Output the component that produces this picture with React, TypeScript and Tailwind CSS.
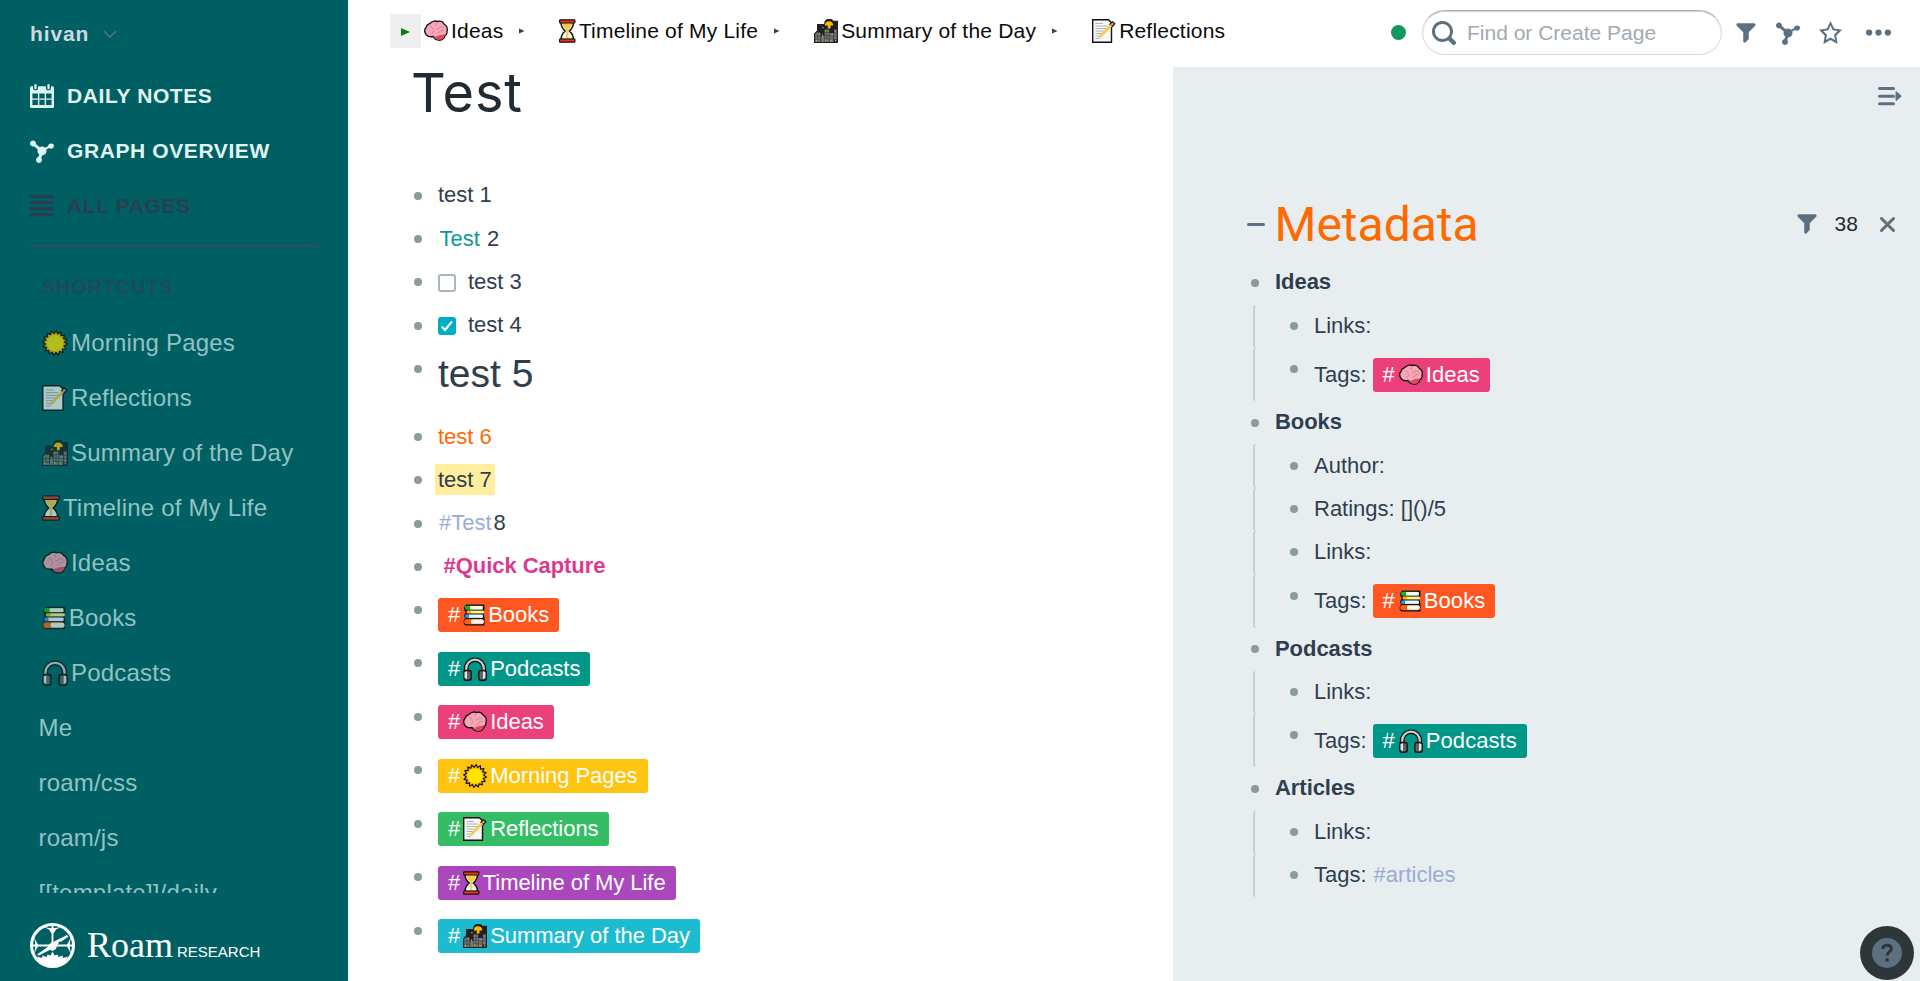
import React from "react";

type EmojiName = "sun" | "memo" | "city" | "hourglass" | "brain" | "books" | "headphones";

const emojiWidth: Record<EmojiName, number> = {
  sun: 24,
  memo: 24,
  city: 24,
  hourglass: 16.5,
  brain: 24,
  books: 22,
  headphones: 24,
};

const sunPoints = Array.from({ length: 32 }, (_, i) => {
  const r = i % 2 === 0 ? 11.5 : 8.8;
  const a = (Math.PI * 2 * i) / 32 + Math.PI / 32;
  return `${(12 + r * Math.cos(a)).toFixed(2)},${(12 + r * Math.sin(a)).toFixed(2)}`;
}).join(" ");

function EmojiArt({ name }: { name: EmojiName }) {
  switch (name) {
    case "sun":
      return (
        <>
          <polygon points={sunPoints} fill="#ffb900" stroke="#111" strokeWidth="1.2" strokeLinejoin="round" />
          <circle cx="12" cy="12" r="7.4" fill="#ffe500" />
        </>
      );
    case "memo":
      return (
        <>
          <path d="M.7.7h15.8l3 3v19.6H.7z" fill="#f7f7f7" stroke="#111" strokeWidth="1.4" />
          <path d="M3.5 4.5H11M3.5 7h11.5M3.5 9.5h12M3.5 12h9M3.5 14.5h8M3.5 17h7M3.5 19.5h4" stroke="#a5aaae" strokeWidth=".9" />
          <path d="M20.5 2.6l2.3 2.2-2.6 2.8-2.4-2.2z" fill="#e39a96" stroke="#111" strokeWidth="1.2" strokeLinejoin="round" />
          <path d="M18.2 5.2l2 2L9.5 18l-2.6.9.7-2.5z" fill="#ffc83d" />
          <path d="M7.7 16.3l1.8 1.7-2.8 1.1z" fill="#e8c8a0" />
        </>
      );
    case "city":
      return (
        <>
          <path d="M0 24V14.500L3 11.500V5h7.200a5.100 5.100 0 0 1 9.300-3.200H24V24z" fill="#1f2122" />
          <path d="M10.900 5.500a4.200 4.200 0 0 1 8.200 0v1h-2.600v3h-2.700v-3h-2.900z" fill="#ffb900" />
          <path d="M1.200 23v-8l2.300-2.300L6.500 15v8zM10.600 10.500h4.600V23h-4.600zM7.200 17h3V23h-3zM15.600 14h3.800v9h-3.800zM20 10.500h2.800V20.500H20z" fill="#74797c" />
          <path d="M1.200 17.200h5.300M1.200 20.200h5.300M3.800 13v10M10.600 13.600H15.200M10.600 16.600H15.200M10.600 19.800H15.200M12.900 10.500V23M15.600 17h3.800M15.600 20h3.800M20 14h2.800M20 17h2.800" stroke="#33373a" strokeWidth=".6" />
          <path d="M8.300 8h1.200v1.200H8.300zM5.200 13.700h1V15h-1zM11.300 11.500h1v1h-1zM8 15.500h1.100v1.200H8zM2 20.900h1.200v1.300H2zM11.300 20.600h1.200v1.400h-1.200zM16.500 20.700h1v1.300h-1zM21 21h1.300v1.300H21zM17.800 14.900h1v1.200h-1z" fill="#f5b51c" />
        </>
      );
    case "hourglass":
      return (
        <>
          <path d="M2 3.500h12.500c0 4-1.700 6.300-4.200 8.500 2.500 2.200 4.200 4.500 4.200 8.500H2c0-4 1.700-6.300 4.200-8.500C3.700 9.800 2 7.500 2 3.500z" fill="#f3f6f7" stroke="#111" strokeWidth="1.5" />
          <path d="M3.5 4h9.500c-.3 3.300-1.700 5-3.700 6.800V20H7.200v-9.200C5.200 9 3.800 7.300 3.500 4z" fill="#ffc83d" />
          <rect x=".6" y=".8" width="15.3" height="3.2" rx=".7" fill="#e8381c" stroke="#111" strokeWidth="1.2" />
          <rect x=".6" y="20" width="15.3" height="3.2" rx=".7" fill="#e8381c" stroke="#111" strokeWidth="1.2" />
        </>
      );
    case "brain":
      return (
        <>
          <path d="M2 8.5C2.500 5 5.500 4.800 6.500 4 8.500 1.700 12 1.700 13.500 2.500 16.500 1.700 19 3.200 20 5c2.500 1.500 3.800 4.500 3 7.500.2 2-.7 3.500-2 4-.7 3.300-3.500 5-6 4.700-2.500 0-4.500-1-6-3.700-2.500.5-5 .3-6.500-1.500C.3 13.500.3 10.500 2 8.500z" fill="#f6a7b8" stroke="#111" strokeWidth="1.3" />
          <path d="M10 17.500c2.500 0 4-.3 6-1.500l5-.5c-.6 3.300-2.800 5.200-5.500 5-2.500-.1-4.300-1-5.500-3z" fill="#e2475c" />
          <path d="M6 7.500c2 .3 3.300 1.500 3 3M12.500 3.500c-1 1.500-.8 2.500.5 3.500M16 8c2-.2 3 .3 4 1.500M7.500 14c1.800-.2 2.300-1.300 2.300-2.700M14 14.500c1.500-2.500 3.500-3.300 6-3.300M12.500 10c2 0 2.700-.7 3.500-2" fill="none" stroke="#dc7388" strokeWidth=".9" />
        </>
      );
    case "books":
      return (
        <>
          <path d="M3 1.500h18.500v5.300l-.8 3.500.8 5V22.500H3C0 22-.2 16.500 2.300 15.500.5 14 1 11.500 2.500 10.300 2.700 8 .7 7.500 1 4.500z" fill="#151515" />
          <rect x="1.8" y="2.8" width="18" height="4" rx="2" fill="#16b51b" />
          <rect x="7" y="3.1" width="12.8" height="3.3" rx=".5" fill="#f6f6f6" />
          <rect x="3.6" y="7.5" width="17.5" height="3" rx="1.3" fill="#ffb900" />
          <rect x="8" y="8" width="12.8" height="2.1" fill="#ffefb3" />
          <rect x="2" y="11.3" width="18" height="3.8" rx="1.7" fill="#2a92e4" />
          <rect x="6" y="11.7" width="13.8" height="3" rx=".5" fill="#f3f8fd" />
          <rect x="1.2" y="15.9" width="19.5" height="5.3" rx="2.5" fill="#f7630c" />
          <rect x="8" y="16.5" width="12.7" height="4.2" rx="1.5" fill="#f6f6f6" />
        </>
      );
    case "headphones":
      return (
        <>
          <path d="M3.200 16v-4.500a8.800 8.800 0 0 1 17.600 0V16" fill="none" stroke="#111" strokeWidth="4.6" />
          <path d="M3.200 16v-4.500a8.800 8.800 0 0 1 17.600 0V16" fill="none" stroke="#c9cccf" strokeWidth="2.2" />
          <rect x=".8" y="13.5" width="7.4" height="9.8" rx="2.2" fill="#5f6468" stroke="#111" strokeWidth="1.4" />
          <rect x="15.8" y="13.5" width="7.4" height="9.8" rx="2.2" fill="#5f6468" stroke="#111" strokeWidth="1.4" />
          <path d="M1.600 15v5.800l2.400 1.400v-8zM22.400 15v5.800l-2.400 1.400v-8z" fill="#e4e6e8" />
        </>
      );
  }
}

function Emoji({ name, size = 24 }: { name: EmojiName; size?: number }) {
  const w = emojiWidth[name];
  return (
    <svg
      className="shrink-0"
      width={(w * size) / 24}
      height={size}
      viewBox={`0 0 ${w} 24`}
      aria-hidden="true"
    >
      <EmojiArt name={name} />
    </svg>
  );
}

const graphPath =
  "M14 3c-1.060 0-1.920.83-1.990 1.880l-1.930.97A2.950 2.950 0 008 5c-.56 0-1.080.16-1.520.43L3.970 3.340C3.980 3.230 4 3.120 4 3c0-1.100-.9-2-2-2s-2 .9-2 2 .9 2 2 2c.24 0 .47-.05.68-.13l2.510 2.090C5.080 7.290 5 7.630 5 8c0 .96.46 1.810 1.160 2.350l-.56 1.690c-.91.19-1.600.99-1.600 1.960 0 1.100.9 2 2 2s2-.9 2-2c0-.51-.2-.97-.51-1.320l.56-1.690C9.680 10.940 11 9.630 11 8c0-.37-.08-.71-.2-1.040l1.920-.96c.36.33.79.54 1.280.54 1.100 0 2-.9 2-2S15.100 3 14 3z";
const filterPath =
  "M13.990.99h-12a1.003 1.003 0 00-.71 1.710l4.710 4.710V14a1.003 1.003 0 001.710.71l2-2c.18-.18.29-.43.29-.71V7.410L14.700 2.700a1.003 1.003 0 00-.71-1.710z";
const searchPath =
  "M15.550 13.430l-2.670-2.680a6.940 6.940 0 001.110-3.760c0-3.870-3.130-7-7-7s-7 3.130-7 7 3.130 7 7 7c1.390 0 2.680-.42 3.760-1.110l2.680 2.670a1.498 1.498 0 102.120-2.120zm-8.560-1.440c-2.760 0-5-2.240-5-5s2.240-5 5-5 5 2.240 5 5-2.240 5-5 5z";
const starPath =
  "M16 6.110l-5.530-.84L8 0 5.530 5.270 0 6.110l4 4.100L3.060 16 8 13.270 12.940 16 12 10.210l4-4.100zM4.910 13.200l.59-3.620L3 7.020l3.450-.53L8 3.200l1.550 3.290 3.450.53-2.500 2.560.59 3.620L8 11.490 4.910 13.200z";
const calendarPath =
  "M1 1.500h1v1a1.700 1.700 0 003.400 0v-1h5.200v1a1.700 1.700 0 003.400 0v-1h1c.5 0 1 .4 1 1V15c0 .6-.4 1-1 1H1c-.6 0-1-.4-1-1V2.500c0-.6.5-1 1-1zM1.600 6.300v3.300h3.700V6.300zM6.200 6.300v3.300h3.600V6.300zM10.700 6.300v3.300h3.700V6.300zM1.600 10.500v3.500h3.700v-3.500zM6.200 10.500v3.500h3.600v-3.500zM10.700 10.500v3.500h3.700v-3.500z";

function Icon({ d, size = 24, children }: { d?: string; size?: number; children?: React.ReactNode }) {
  return (
    <svg className="shrink-0" width={size} height={size} viewBox="0 0 16 16" fill="currentColor" fillRule="evenodd" aria-hidden="true">
      {d ? <path d={d} /> : null}
      {children}
    </svg>
  );
}

function NavItem({ icon, label, className }: { icon: React.ReactNode; label: string; className: string }) {
  return (
    <div className={`flex h-[55px] items-center gap-[13px] text-[21px] font-bold tracking-[0.6px] ${className}`}>
      {icon}
      <span>{label}</span>
    </div>
  );
}

const shortcuts: { emoji?: EmojiName; label: string }[] = [
  { emoji: "sun", label: "Morning Pages" },
  { emoji: "memo", label: "Reflections" },
  { emoji: "city", label: "Summary of the Day" },
  { emoji: "hourglass", label: "Timeline of My Life" },
  { emoji: "brain", label: "Ideas" },
  { emoji: "books", label: "Books" },
  { emoji: "headphones", label: "Podcasts" },
  { label: "Me" },
  { label: "roam/css" },
  { label: "roam/js" },
  { label: "[[template]]/daily" },
];

function Sidebar() {
  return (
    <aside className="flex h-full w-[348px] shrink-0 flex-col bg-[#005f63]">
      <div className="flex h-[68px] shrink-0 items-center gap-[14px] pb-px pl-[30px] text-[21px] font-bold tracking-[0.9px] text-[#ced9e0]">
        <span>hivan</span>
        <svg width="14" height="8" viewBox="0 0 14 8" fill="none" stroke="#5c7080" strokeWidth="1.5" aria-hidden="true">
          <path d="M1 1l6 6 6-6" />
        </svg>
      </div>
      <nav className="pl-[30px]">
        <NavItem
          className="text-[#e0f5f2]"
          label="DAILY NOTES"
          icon={
            <Icon d={calendarPath}>
              <rect x="2.9" y="0" width="1.5" height="3.5" rx=".75" />
              <rect x="11.6" y="0" width="1.5" height="3.5" rx=".75" />
            </Icon>
          }
        />
        <NavItem className="text-[#e0f5f2]" label="GRAPH OVERVIEW" icon={<Icon d={graphPath} />} />
        <NavItem
          className="text-[#293f51]"
          label="ALL PAGES"
          icon={
            <Icon>
              <rect y=".7" width="16" height="2.2" rx=".6" />
              <rect y="4.7" width="16" height="2.2" rx=".6" />
              <rect y="8.7" width="16" height="2.2" rx=".6" />
              <rect y="12.7" width="16" height="2.2" rx=".6" />
            </Icon>
          }
        />
      </nav>
      <div className="mt-3 ml-[30px] h-[2px] w-[288px] shrink-0 bg-[#394b59]" />
      <div className="flex h-[68px] shrink-0 items-center pt-[11px] pl-[42px] text-[20px] font-bold tracking-[0.75px] text-[#1f4a5a]">
        SHORTCUTS
      </div>
      <div className="h-[578px] shrink-0 overflow-hidden">
        {shortcuts.map((s) => (
          <div
            key={s.label}
            className={`flex h-[55px] items-center text-[24px] tracking-[0.2px] whitespace-pre text-[#92c2c2] ${s.emoji ? "pl-[42px]" : "pl-[38.5px]"}`}
          >
            {s.emoji ? (
              <span className="mr-[3px] opacity-70">
                <Emoji name={s.emoji} size={26} />
              </span>
            ) : null}
            <span>{s.label}</span>
          </div>
        ))}
      </div>
      <div className="flex items-start pt-[30px] pl-[30px] text-white">
        <svg width="45" height="45" viewBox="0 0 45 45" aria-hidden="true">
          <circle cx="22.5" cy="22.5" r="21" fill="none" stroke="#fff" strokeWidth="3" />
          <path d="M22.500 3v22M3 22.500h39" stroke="#fff" strokeWidth="1.8" />
          <path d="M13 3.500Q22.500 7 32 3.500L26 6.500 24.500 9l-2 2-2-2L19 6.500zM3.500 13Q7 22.500 3.500 32L6 27l2.500-4.500L6 18zM41.500 13Q38 22.500 41.500 32L39 27l-2.500-4.500L39 18z" fill="#fff" />
          <path d="M7 31.500L19 23l4-4 14-7 1.500 1.500-10 7-4 4L9 32.500z" fill="#fff" />
          <path d="M18 22.500l4.500-4 4.500 4-1 3.500-3.500 2-3.500-2z" fill="#fff" />
          <path d="M7 33.500l5 1.500.5-2.500 4 1.500 1-2.500 3 1 2-4 2 4 3-1 1 2.500 4-1.500.5 2.500 5-1.500C35 40 29 43.500 22.500 43.500S10 40 7 33.500z" fill="#fff" />
          <circle cx="29.5" cy="19.5" r="1" fill="#005f63" />
        </svg>
        <div className="flex items-baseline gap-1 pt-0.5 pl-3">
          <span className="font-['Liberation_Serif',serif] text-[36px] leading-[40px]">Roam</span>
          <span className="text-[15px] leading-[40px]">RESEARCH</span>
        </div>
      </div>
    </aside>
  );
}

function CrumbArrow() {
  return (
    <svg className="mr-[34px] ml-4 shrink-0" width="6" height="6" viewBox="0 0 6 6" aria-hidden="true">
      <path d="M0 .6L5.500 3 0 5.400z" fill="#30404d" />
    </svg>
  );
}

const crumbs: { emoji: EmojiName; label: string }[] = [
  { emoji: "brain", label: "Ideas" },
  { emoji: "hourglass", label: "Timeline of My Life" },
  { emoji: "city", label: "Summary of the Day" },
  { emoji: "memo", label: "Reflections" },
];

function Topbar() {
  return (
    <header className="flex h-[67px] shrink-0 items-center justify-between bg-white">
      <div className="flex items-center pb-[5px] pl-[42px] text-[21px] tracking-[0.2px] whitespace-nowrap text-[#0a0a0a]">
        <div className="mr-[3px] flex h-[34px] w-[31px] items-center justify-center bg-[#efefef]">
          <svg className="mt-0.5" width="9" height="8" viewBox="0 0 9 8" aria-hidden="true">
            <path d="M0 0l9 4-9 4z" fill="#0a820a" />
          </svg>
        </div>
        {crumbs.map((c, i) => (
          <div key={c.label} className="flex items-center">
            <Emoji name={c.emoji} />
            <span className="ml-[3px]">{c.label}</span>
            {i < crumbs.length - 1 ? <CrumbArrow /> : null}
          </div>
        ))}
      </div>
      <div className="flex items-center pr-[29.5px] pb-0.5 text-[#5c7080]">
        <span className="mr-4 size-[15px] rounded-full bg-[#0f9960]" />
        <div className="mr-[13px] flex h-[45px] w-[300px] items-center rounded-full border border-[#d5d8da] border-t-[#aeb1b3] pl-[9px] shadow-[inset_0_1px_1px_rgba(16,22,26,0.2)]">
          <Icon d={searchPath} />
          <span className="ml-[11px] text-[21px] text-[#a0abb4]">Find or Create Page</span>
        </div>
        <Icon d={filterPath} size={22} />
        <span className="w-[19px]" />
        <Icon d={graphPath} size={24} />
        <span className="w-[18.5px]" />
        <Icon d={starPath} size={23} />
        <span className="w-6" />
        <Icon size={25}>
          <circle cx="2" cy="8" r="2" />
          <circle cx="8" cy="8" r="2" />
          <circle cx="14" cy="8" r="2" />
        </Icon>
      </div>
    </header>
  );
}

function Bullet() {
  return (
    <span className="flex h-[43.2px] w-2 shrink-0 items-center">
      <span className="size-2 rounded-full bg-[#8a9b9b]" />
    </span>
  );
}

function Tag({ emoji, label, color, wide = false }: { emoji: EmojiName; label: string; color: string; wide?: boolean }) {
  return (
    <span className={`flex h-[34px] items-center rounded-[3px] px-[10px] text-[22px] text-white ${color}`}>
      <span className={wide ? "mr-1" : "mr-[3px]"}>#</span>
      <Emoji name={emoji} />
      <span className={wide ? "ml-[3px] tracking-[0.05px]" : "ml-[3px] tracking-[-0.05px]"}>{label}</span>
    </span>
  );
}

function Row({ children }: { children: React.ReactNode }) {
  return (
    <li className="flex gap-4">
      <Bullet />
      <div className="flex h-[43.2px] items-center pb-0.5 whitespace-pre">{children}</div>
    </li>
  );
}

function TagRow({ children }: { children: React.ReactNode }) {
  return (
    <li className="flex h-[53.5px] gap-4">
      <Bullet />
      <div className="flex items-start pt-[10px] leading-[34px]">{children}</div>
    </li>
  );
}

const tagRows: { emoji: EmojiName; label: string; color: string }[] = [
  { emoji: "books", label: "Books", color: "bg-[#ff5722]" },
  { emoji: "headphones", label: "Podcasts", color: "bg-[#009688]" },
  { emoji: "brain", label: "Ideas", color: "bg-[#ec407a]" },
  { emoji: "sun", label: "Morning Pages", color: "bg-[#ffc40f]" },
  { emoji: "memo", label: "Reflections", color: "bg-[#34bd65]" },
  { emoji: "hourglass", label: "Timeline of My Life", color: "bg-[#ab47bc]" },
  { emoji: "city", label: "Summary of the Day", color: "bg-[#1cbbd0]" },
];

function Page() {
  return (
    <main className="w-[825px] shrink-0 bg-white pl-[66px]">
      <h1 className="-ml-[3px] h-[107.4px] font-['Inter',sans-serif] text-[54px] leading-[52px] font-normal tracking-[0.9px] text-[#202b33]">
        Test
      </h1>
      <ul className="text-[22px] text-[#2f3e4e]">
        <Row>test 1</Row>
        <Row>
          <span className="pl-[1.5px] text-[#0f9a92]">Test</span>
          <span className="pl-px"> 2</span>
        </Row>
        <Row>
          <span className="mt-[3px] mr-3 size-[18px] rounded-[3px] border-2 border-[#a7b6c2]" />
          test 3
        </Row>
        <Row>
          <span className="mt-0.5 mr-3 flex size-[18px] items-center justify-center rounded-[3px] bg-[#00acc6]">
            <svg width="14" height="14" viewBox="0 0 14 14" fill="none" stroke="#fff" strokeWidth="2.2" aria-hidden="true">
              <path d="M1.800 7.500l3.200 3.500 7-8.500" />
            </svg>
          </span>
          test 4
        </Row>
        <li className="flex h-[68.5px] gap-4">
          <Bullet />
          <span className="pt-1 text-[39px] leading-[45px]">test 5</span>
        </li>
        <Row>
          <span className="text-[#ff6a00]">test 6</span>
        </Row>
        <Row>
          <span className="-ml-[3px] bg-[#ffee9e] px-[3px] leading-[31px]">test 7</span>
        </Row>
        <Row>
          <span className="pr-0.5 pl-px text-[#9bacd4]">#Test</span>8
        </Row>
        <Row>
          <span className="pl-[5.5px] font-bold tracking-[-0.05px] text-[#db3a8f]">#Quick Capture</span>
        </Row>
        {tagRows.map((t) => (
          <TagRow key={t.label}>
            <Tag {...t} />
          </TagRow>
        ))}
      </ul>
    </main>
  );
}

type Child = { text: string; tag?: { emoji: EmojiName; label: string; color: string }; link?: string };

const metadata: { title: string; children: Child[] }[] = [
  {
    title: "Ideas",
    children: [{ text: "Links:" }, { text: "Tags:", tag: tagRows[2] }],
  },
  {
    title: "Books",
    children: [{ text: "Author:" }, { text: "Ratings: []()/5" }, { text: "Links:" }, { text: "Tags:", tag: tagRows[0] }],
  },
  {
    title: "Podcasts",
    children: [{ text: "Links:" }, { text: "Tags:", tag: tagRows[1] }],
  },
  {
    title: "Articles",
    children: [{ text: "Links:" }, { text: "Tags:", link: "#articles" }],
  },
];

function RightPanel() {
  return (
    <section className="flex-1 overflow-hidden bg-[#e8eef0] text-[#5c7080]">
      <div className="flex h-[120px] justify-end pt-[17px] pr-[18px]">
        <svg width="24" height="24" viewBox="0 0 24 24" fill="currentColor" aria-hidden="true">
          <rect x="0" y="3" width="17" height="3" rx="1.5" />
          <rect x="0" y="10.7" width="17" height="3" rx="1.5" />
          <rect x="0" y="18.3" width="17" height="3" rx="1.5" />
          <path d="M17.500 8.500c0-.9.8-1.200 1.400-.7l4.300 3.700c.5.4.5.9 0 1.300l-4.300 3.700c-.6.5-1.400.2-1.400-.7z" />
        </svg>
      </div>
      <div className="flex h-[74.4px] items-center pr-[24.5px] pl-[74px]">
        <span className="h-[3px] w-[18px] rounded-full bg-[#5c7080]" />
        <h2 className="ml-[9.5px] pt-0.5 font-['Roboto',sans-serif] text-[48px] leading-[60px] text-[#ff6a00]">Metadata</h2>
        <span className="flex-1" />
        <Icon d={filterPath} size={22} />
        <span className="ml-[17px] w-[44px] text-[21px] text-[#202b33]">38</span>
        <svg width="17" height="17" viewBox="0 0 17 17" fill="none" stroke="currentColor" strokeWidth="3" strokeLinecap="round" aria-hidden="true">
          <path d="M2.500 2.500l12 12M14.500 2.500l-12 12" />
        </svg>
      </div>
      <div className="pl-[78px] text-[22px] text-[#2f3e4e]">
        {metadata.map((block) => (
          <div key={block.title}>
            <div className="flex gap-4">
              <Bullet />
              <span className="flex h-[43.2px] items-center pb-0.5 font-bold tracking-[-0.05px]">{block.title}</span>
            </div>
            <ul className="ml-0.5">
              {block.children.map((c, i) => (
                <div key={i} className="rounded-l-[3px] border-l-2 border-[#c8ced1] pl-[35px]">
                  {c.tag ? (
                    <TagRow>
                      <span className="mr-[6px]">{c.text}</span>
                      <Tag {...c.tag} wide />
                    </TagRow>
                  ) : (
                    <Row>
                      {c.text}
                      {c.link ? <span className="pl-[7px] text-[#9bacd4]">{c.link}</span> : null}
                    </Row>
                  )}
                </div>
              ))}
            </ul>
          </div>
        ))}
      </div>
    </section>
  );
}

export default function App() {
  return (
    <div className="relative flex h-[981px] w-[1920px] overflow-hidden bg-white font-['Liberation_Sans',Arial,sans-serif]">
      <Sidebar />
      <div className="flex min-w-0 flex-1 flex-col">
        <Topbar />
        <div className="flex min-h-0 flex-1">
          <Page />
          <RightPanel />
        </div>
      </div>
      <button
        aria-label="Help"
        className="absolute right-[6px] bottom-px flex size-[54px] items-center justify-center rounded-full bg-[#2f3639] text-[#5c7080]"
      >
        <svg width="30" height="30" viewBox="0 0 30 30" aria-hidden="true">
          <circle cx="15" cy="15" r="15" fill="currentColor" />
          <path d="M10.800 11c.2-2.600 1.800-3.800 4.200-3.800s4.300 1.200 4.300 3.500c0 3.200-4.100 3.200-4.100 6.800" fill="none" stroke="#2f3639" strokeWidth="3" />
          <rect x="13.5" y="20.3" width="3.3" height="3.3" rx=".6" fill="#2f3639" />
        </svg>
      </button>
    </div>
  );
}
